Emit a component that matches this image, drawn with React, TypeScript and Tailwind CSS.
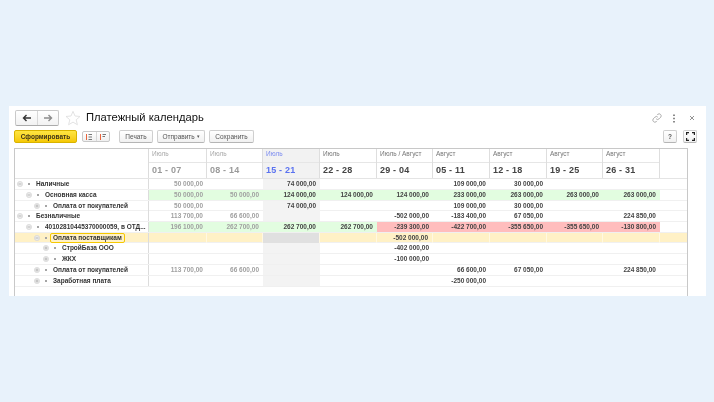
import React from "react";

const cols = "grid-cols-[134px_58px_56px_57px_57px_56px_57px_57px_56px_57px_28px]";

const heads = [
  ["Июль", "01 - 07"], ["Июль", "08 - 14"], ["Июль", "15 - 21"], ["Июль", "22 - 28"], ["Июль / Август", "29 - 04"],
  ["Август", "05 - 11"], ["Август", "12 - 18"], ["Август", "19 - 25"], ["Август", "26 - 31"],
];

type Row = { label: string; indent: number; h: string; v: string[]; open: boolean; bg?: string[]; rowBg?: string; sel?: boolean };
const G = "bg-[#e2fde0]";
const R = "bg-[#ffbdbd]";
const rows: Row[] = [
  { label: "Наличные", indent: 0, h: "h-[11px]", open: true, v: ["50 000,00", "", "74 000,00", "", "", "109 000,00", "30 000,00", "", ""] },
  { label: "Основная касса", indent: 1, h: "h-[11px]", open: true, bg: [G, G, G, G, G, G, G, G, G], v: ["50 000,00", "50 000,00", "124 000,00", "124 000,00", "124 000,00", "233 000,00", "263 000,00", "263 000,00", "263 000,00"] },
  { label: "Оплата от покупателей", indent: 2, h: "h-[10px]", open: false, v: ["50 000,00", "", "74 000,00", "", "", "109 000,00", "30 000,00", "", ""] },
  { label: "Безналичные", indent: 0, h: "h-[11px]", open: true, v: ["113 700,00", "66 600,00", "", "", "-502 000,00", "-183 400,00", "67 050,00", "", "224 850,00"] },
  { label: "40102810445370000059, в ОТД...", indent: 1, h: "h-[11px]", open: true, bg: [G, G, G, G, R, R, R, R, R], v: ["196 100,00", "262 700,00", "262 700,00", "262 700,00", "-239 300,00", "-422 700,00", "-355 650,00", "-355 650,00", "-130 800,00"] },
  { label: "Оплата поставщикам", indent: 2, h: "h-[10px]", open: true, sel: true, rowBg: "bg-[#fff1c6]", v: ["", "", "", "", "-502 000,00", "", "", "", ""] },
  { label: "СтройБаза ООО", indent: 3, h: "h-[11px]", open: false, v: ["", "", "", "", "-402 000,00", "", "", "", ""] },
  { label: "ЖКХ", indent: 3, h: "h-[11px]", open: false, v: ["", "", "", "", "-100 000,00", "", "", "", ""] },
  { label: "Оплата от покупателей", indent: 2, h: "h-[11px]", open: false, v: ["113 700,00", "66 600,00", "", "", "", "66 600,00", "67 050,00", "", "224 850,00"] },
  { label: "Заработная плата", indent: 2, h: "h-[11px]", open: false, v: ["", "", "", "", "", "-250 000,00", "", "", ""] },
];
const indents = ["pl-[2px]", "pl-[11px]", "pl-[19px]", "pl-[28px]"];

function Toggle({ open }: { open: boolean }) {
  return (
    <svg width="6" height="6" viewBox="0 0 6 6" className="shrink-0">
      <circle cx="3" cy="3" r="2.6" fill="#ececec" stroke="#d4d4d4" strokeWidth="0.7" />
      <path d={open ? "M1.5 3H4.5" : "M1.5 3H4.5M3 1.5V4.5"} stroke="#aaaaaa" strokeWidth="0.7" />
    </svg>
  );
}

function Btn({ children, cls }: { children: React.ReactNode; cls: string }) {
  return (
    <div className={`flex items-center justify-center h-[13px] rounded-[2px] border border-[#cfcfcf] border-b-[#b5b5b5] bg-gradient-to-b from-white to-[#f1f1f1] text-[6.5px] text-[#555] ${cls}`}>
      {children}
    </div>
  );
}

export default function App() {
  return (
    <div className="w-[714px] h-[402px] bg-[#e8f2fb] pt-[106px] pl-[9px] overflow-hidden font-['Liberation_Sans',Arial,sans-serif]">
      <div className="w-[697px] h-[190px] bg-white flex flex-col pl-[5px] blur-[0.4px]">
        <div className="flex items-center h-[23px] pt-[1px] shrink-0">
          <div className="flex h-[16px] w-[44px] ml-[1px] rounded-[2px] border border-[#c9c9c9] border-b-[#ababab] bg-gradient-to-b from-white to-[#f2f2f2]">
            <div className="w-[22px] flex items-center justify-center border-r border-[#d8d8d8]">
              <svg width="10" height="8" viewBox="0 0 10 8"><path d="M9 4H2M4.500 1L1.500 4L4.500 7" fill="none" stroke="#333" strokeWidth="1.400" /></svg>
            </div>
            <div className="flex-1 flex items-center justify-center">
              <svg width="10" height="8" viewBox="0 0 10 8"><path d="M1 4H8M5.500 1L8.500 4L5.500 7" fill="none" stroke="#8c8c8c" strokeWidth="1.400" /></svg>
            </div>
          </div>
          <svg width="16" height="16" viewBox="0 0 24 24" className="ml-[6px]">
            <path d="M12 2l3 7 7.500.7-5.700 5 1.800 7.400L12 18.200 5.400 22.100l1.800-7.400-5.700-5L9 9z" fill="none" stroke="#dedede" strokeWidth="1.300" />
          </svg>
          <div className="ml-[5px] text-[11.2px] leading-none text-[#111]">Платежный календарь</div>
          <div className="ml-auto flex items-center pr-[11px]">
            <svg width="10" height="10" viewBox="0 0 24 24" fill="none" stroke="#a5a5a5" strokeWidth="2.200">
              <path d="M10 14a5 5 0 0 0 7 0l4-4a5 5 0 0 0-7-7l-2 2" /><path d="M14 10a5 5 0 0 0-7 0l-4 4a5 5 0 0 0 7 7l2-2" />
            </svg>
            <svg width="4" height="9" viewBox="0 0 4 9" className="ml-[10px]"><path d="M2 .5V2M2 3.700V5.200M2 7V8.500" stroke="#666" strokeWidth="1.500" /></svg>
            <svg width="6" height="6" viewBox="0 0 6 6" className="ml-[13px]"><path d="M1 1L5 5M5 1L1 5" stroke="#888" strokeWidth="0.9" /></svg>
          </div>
        </div>

        <div className="flex items-center h-[13px] mb-[5px] shrink-0 mt-[1px]">
          <div className="flex items-center justify-center w-[63px] h-[13px] rounded-[2px] bg-gradient-to-b from-[#ffe640] to-[#f5c800] border border-[#d9b300] text-[6.5px] font-bold text-[#3d3418]">Сформировать</div>
          <div className="flex ml-[5px] w-[28px] h-[11px] rounded-[2px] border border-[#c8c8c8] bg-gradient-to-b from-white to-[#f0f0f0]">
            <div className="flex-1 flex items-center justify-center border-r border-[#d8d8d8]">
              <svg width="8" height="8" viewBox="0 0 8 8"><path d="M1.500 1V7" stroke="#e8643c" /><path d="M3.500 1.500H7M3.500 4H7M3.500 6.500H7" stroke="#777" /></svg>
            </div>
            <div className="flex-1 flex items-center justify-center">
              <svg width="8" height="8" viewBox="0 0 8 8"><path d="M1.500 1V7" stroke="#e8643c" /><path d="M3.500 1.500H7M3.500 3.500H6" stroke="#777" /></svg>
            </div>
          </div>
          <Btn cls="ml-[9px] w-[34px]">Печать</Btn>
          <Btn cls="ml-[4px] w-[48px]">Отправить&nbsp;<span className="text-[5px]">▾</span></Btn>
          <Btn cls="ml-[4px] w-[45px]">Сохранить</Btn>
          <Btn cls="ml-auto w-[14px] font-bold text-[#444]">?</Btn>
          <Btn cls="ml-[6px] w-[14px] mr-[9px]">
            <svg width="9" height="9" viewBox="0 0 9 9" fill="none" stroke="#222" strokeWidth="1.200"><path d="M.6 3V.6H3M6 .6H8.400V3M.6 6V8.400H3M6 8.400H8.400V6" /></svg>
          </Btn>
        </div>

        <div className="w-[674px] flex-1 border-l border-r border-t border-[#c8c8c8] flex flex-col min-h-0">
          <div className={`grid ${cols} h-[30px] border-b border-[#e4e4e4] shrink-0`}>
            <div className="border-r border-[#dcdcdc]" />
            {heads.map((h, i) => (
              <div key={i} className={`flex flex-col border-r border-[#dedede] ${i === 2 ? "bg-[#f2f2f2]" : ""}`}>
                <div className={`h-[14px] pl-[3px] pt-[1px] leading-[8px] text-[6.500px] border-b border-[#e6e6e6] ${i === 2 ? "text-[#7c8cf0]" : i < 2 ? "text-[#a8a8a8]" : "text-[#777]"}`}>{h[0]}</div>
                <div className={`flex-1 flex items-center pl-[3px] text-[9px] font-bold tracking-[0.2px] ${i === 2 ? "text-[#5a72f0]" : i < 2 ? "text-[#9a9a9a]" : "text-[#444]"}`}>{h[1]}</div>
              </div>
            ))}
            <div />
          </div>
          {rows.map((r, ri) => (
            <div key={ri} className={`grid ${cols} ${r.h} border-b border-[#f0f0f0] shrink-0 ${r.rowBg ?? ""}`}>
              <div className={`flex items-center border-r border-[#dcdcdc] ${indents[r.indent]}`}>
                <Toggle open={r.open} />
                <span className="w-[2px] h-[2px] bg-[#a5a5a5] shrink-0 ml-[5px]" />
                <span className={`text-[6.500px] font-bold text-[#333] whitespace-nowrap leading-[8px] ${r.sel ? "ml-[4px] outline outline-[1px] outline-[#f5c800] rounded-[1px] px-[2px]" : "ml-[6px]"}`}>{r.label}</span>
              </div>
              {r.v.map((v, ci) => {
                const cur = ci === 2;
                const bg = r.bg ? r.bg[ci] : cur ? (r.sel ? "bg-[#e0e0e0]" : "bg-[#f3f3f3]") : "";
                return (
                  <div key={ci} className={`flex items-center justify-end pr-[4px] text-[6.500px] font-bold whitespace-nowrap ${bg} ${ci < 2 ? "text-[#a0a0a0]" : "text-[#444]"} ${r.sel ? "border-r border-[#fff8e2]" : ""}`}>{v}</div>
                );
              })}
              <div />
            </div>
          ))}
        </div>
      </div>
    </div>
  );
}
